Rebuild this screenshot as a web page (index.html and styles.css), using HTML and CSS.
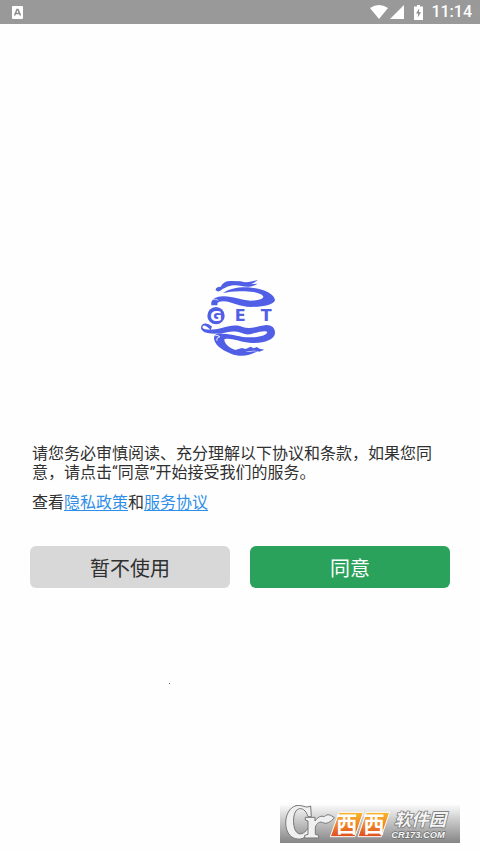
FILE: index.html
```
<!DOCTYPE html>
<html lang="zh-CN">
<head>
  <meta charset="UTF-8">
  <meta name="viewport" content="width=device-width, initial-scale=1.0">
  <title>GET</title>
  <link rel="stylesheet" href="styles.css">
</head>
<body>
  <header class="status-bar">
    <svg class="status-app" width="11" height="13" viewBox="0 0 11 13">
      <rect width="11" height="13" rx="1" fill="#fff"/>
      <path d="M2.5 9.5 5 3.5h1l2.500 6M3.500 7.500h4" fill="none" stroke="#8c8c8c" stroke-width="1.500"/>
    </svg>
    <div class="status-icons">
      <svg width="18" height="14" viewBox="0 0 18 14">
        <path d="M0 3Q9-3 18 3L9 14Z" fill="#fff"/>
      </svg>
      <svg width="14" height="14" viewBox="0 0 14 14">
        <path d="M14 0V14H0Z" fill="#fff"/>
      </svg>
      <svg class="status-battery" width="9" height="15" viewBox="0 0 9 15">
        <path d="M3 0h3v1.500h3V15H0V1.500h3Z" fill="#fff"/>
        <path d="M5.300 3.500 2 8.500h2.200L3.700 12.500 7 7.300H4.900Z" fill="#8c8c8c"/>
      </svg>
      <span class="status-time">11:14</span>
    </div>
  </header>

  <main class="content">
    <svg class="logo" viewBox="8 0 285 285" role="img" aria-label="GET">
      <g fill="#505fe6">
        <path d="M76 61C75 54 82 50 91 50C97 38 108 32 122 33L151 34C168 39 184 36 203 29C194 36 190 39 180 43L202 41C190 49 173 53 153 48C137 44 124 46 114 49C105 54 98 55 92 61C86 66 81 65 76 61Z"/>
        <path d="M63 106C60 88 76 80 98 79C127 78 150 91 181 92C203 92 220 87 219 80C216 70 190 65 164 64C136 62 114 66 98 69C118 55 153 49 183 53C221 57 252 72 254 90C252 104 217 111 183 111C146 111 126 95 99 94C84 94 79 98 82 106Z"/>
        <path d="M61 180C42 160 35 166 37 174C43 181 71 180 94 174C121 166 137 164 157 171C180 180 206 167 228 165C245 165 255 175 254 190C252 211 216 222 177 218C142 215 122 202 102 208C101 222 123 240 155 245C171 247 188 245 204 242C181 258 149 262 122 251C91 240 72 222 71 205C71 192 82 190 97 191C131 192 151 203 181 202C209 202 229 195 231 187C230 180 207 184 183 192C172 195 164 193 154 189C128 179 112 187 90 190C56 194 33 187 32 174C32 160 49 155 65 170Z"/>
        <path d="M132 241L155 234 166 237 181 230 190 235 199 231 208 236 222 239 207 245C187 238 164 247 150 249Z"/>
        <circle cx="77" cy="137" r="26"/>
      </g>
      <path d="M75 197C81 196 85 196 88 201C81 202 78 206 80 212" fill="none" stroke="#fff" stroke-width="3"/>
      <path d="M66 90C71 87 80 87 84 92" fill="none" stroke="#fff" stroke-width="2"/>
      <text class="logo-letter logo-initial" x="77" y="153">G</text>
      <text class="logo-letter" x="150" y="154">E</text>
      <text class="logo-letter" x="228" y="154">T</text>
    </svg>

    <div class="agreement">
      <p>请您务必审慎阅读、充分理解以下协议和条款，如果您同意，请点击“同意”开始接受我们的服务。</p>
      <p>查看<a href="#privacy">隐私政策</a>和<a href="#service">服务协议</a></p>
    </div>

    <div class="actions">
      <button type="button" class="btn btn-decline">暂不使用</button>
      <button type="button" class="btn btn-agree">同意</button>
    </div>

    <span class="dot"></span>
  </main>

  <footer class="site-mark">
    <svg class="site-logo" viewBox="0 0 540 114" role="img" aria-label="西西软件园">
      <defs>
        <linearGradient id="orange" x1="0" y1="0" x2="0" y2="1">
          <stop offset="0" stop-color="#f9b52b"/>
          <stop offset="0.500" stop-color="#f08728"/>
          <stop offset="1" stop-color="#df4c20"/>
        </linearGradient>
      </defs>
      <path d="M92 3L94 35H84C78 15 66 8 55 12C35 19 36 79 56 86C70 90 81 75 87 65L97 70C84 93 68 107 47 101C7 93 7 14 48 2C63-2 76 8 84 6Z" class="mark-silver"/>
      <path d="M76 37H105V48C113 36 124 31 133 35C143 24 153 31 163 38C153 50 139 60 127 52C116 49 106 58 106 70V88L116 91V99H74V91L84 88V48L76 45Z" class="mark-silver"/>
      <path d="M177 22H250L225 95H151Z M259 22H329L304 95H234Z" fill="url(#orange)" stroke="#fff" stroke-width="3"/>
      <text class="mark-tile" x="200" y="81">西</text>
      <text class="mark-tile" x="282" y="81">西</text>
      <text class="mark-name" x="342" y="63">软件园</text>
      <text class="mark-url" x="334" y="98">CR173.COM</text>
    </svg>
  </footer>
</body>
</html>
```
FILE: styles.css
```
* {
  box-sizing: border-box;
}

body {
  display: flex;
  flex-direction: column;
  min-height: 100vh;
  margin: 0;
  background: #fefefe;
  color: #303030;
  font-family: Roboto, "Noto Sans CJK SC", sans-serif;
}

.status-bar {
  display: flex;
  align-items: center;
  justify-content: space-between;
  height: 24px;
  padding: 0 8px 0 12px;
  background: #999;
  color: #fff;
}

.status-icons {
  display: flex;
  align-items: center;
  gap: 2px;
}

.status-battery {
  margin: 0 6px 0 8px;
}

.status-time {
  font-size: 16px;
  font-weight: 500;
  line-height: 24px;
}

.content {
  display: flex;
  flex: 1;
  flex-direction: column;
  padding: 246px 30px 0;
}

.logo {
  align-self: center;
  width: 95px;
  height: 95px;
}

.logo-letter {
  fill: #505fe6;
  font-family: "DejaVu Sans", sans-serif;
  font-size: 48px;
  font-weight: bold;
  text-anchor: middle;
}

.logo-initial {
  fill: #fff;
  font-size: 42px;
}

.agreement {
  margin-top: 79px;
  padding: 0 2px;
  font-size: 16px;
  line-height: 19px;
}

.agreement p {
  margin: 0 0 11px;
}

.agreement a {
  color: #2f8ee8;
  text-underline-offset: 2px;
}

.actions {
  display: flex;
  gap: 20px;
  margin-top: 23px;
}

.btn {
  flex: 1;
  height: 42px;
  padding: 0;
  border: 0;
  border-radius: 6px;
  font-family: inherit;
  font-size: 20px;
  cursor: pointer;
}

.btn-decline {
  background: #d8d8d8;
  color: #303030;
}

.btn-agree {
  background: #2ba25c;
  color: #fff;
}

.dot {
  width: 1px;
  height: 1px;
  margin: 95px 0 20px 139px;
  background: #666;
}

.site-mark {
  align-self: flex-end;
  width: 180px;
  margin: 0 20px 10px 0;
  background: linear-gradient(#fafafa, #c4c4c4 45%, #858585);
}

.site-logo {
  display: block;
  width: 100%;
}

.mark-silver {
  fill: #f0f0f0;
  stroke: #777;
  stroke-width: 3px;
}

.mark-tile,
.mark-name {
  fill: #fff;
  font-family: "Noto Sans CJK SC", sans-serif;
  font-size: 52px;
  font-weight: bold;
}

.mark-tile {
  font-size: 64px;
  text-anchor: middle;
}

.mark-name,
.mark-url {
  fill: #f4f4f4;
  stroke: #707070;
  stroke-width: 4px;
  paint-order: stroke;
  font-style: italic;
}

.mark-url {
  font-family: "Liberation Sans", sans-serif;
  font-size: 28px;
  font-weight: bold;
}
```
